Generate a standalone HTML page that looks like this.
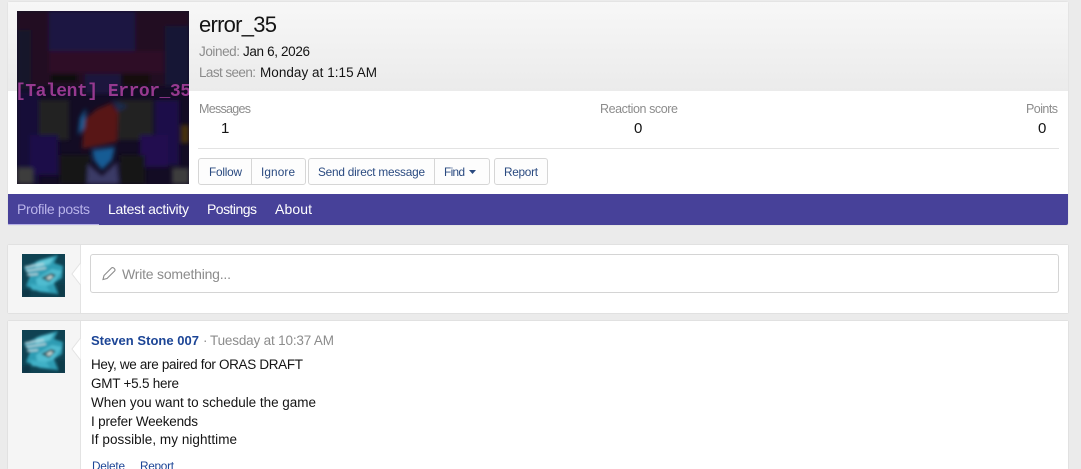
<!DOCTYPE html>
<html><head><meta charset="utf-8"><style>
html,body{margin:0;padding:0;width:1081px;height:469px;overflow:hidden;background:#ebebeb}
.a{position:absolute;box-sizing:border-box}
svg{position:absolute;left:0;top:0}
text{font-family:"Liberation Sans",sans-serif;font-size:13.5px;fill:#141414}
.g{fill:#8c8c8c}.b{fill:#2a4a80}.w{fill:#fff}
.s{font-size:12.5px}.k{font-size:11.8px}.n{font-size:14px}
</style></head><body>
<div class="a" style="left:8px;top:2px;width:1060px;height:223px;background:#fff;border-radius:2px;box-shadow:0 0 1px #bbb"></div>
<div class="a" style="left:8px;top:2px;width:1060px;height:89px;background:linear-gradient(#f7f7f7,#ebebeb)"></div>
<div class="a" style="left:198px;top:148px;width:861px;height:1px;background:#e3e3e3"></div>
<div class="a" style="left:198px;top:158px;width:108px;height:27px;border:1px solid #d6d6d6;border-radius:3px;background:#fdfdfd"></div>
<div class="a" style="left:251px;top:158px;width:1px;height:27px;background:#d6d6d6"></div>
<div class="a" style="left:308px;top:158px;width:182px;height:27px;border:1px solid #d6d6d6;border-radius:3px;background:#fdfdfd"></div>
<div class="a" style="left:434px;top:158px;width:1px;height:27px;background:#d6d6d6"></div>
<div class="a" style="left:494px;top:158px;width:54px;height:27px;border:1px solid #d6d6d6;border-radius:3px;background:#fdfdfd"></div>
<div class="a" style="left:8px;top:194px;width:1060px;height:31px;background:#474199;border-radius:0 0 2px 2px"></div>
<div class="a" style="left:8px;top:224px;width:91px;height:1px;background:#b4aee6"></div>

<div class="a" style="left:8px;top:245px;width:1060px;height:68px;background:#fff;box-shadow:0 0 1px #bbb"></div>
<div class="a" style="left:8px;top:245px;width:73px;height:68px;background:#f5f5f5;border-right:1px solid #e3e3e3"></div>
<div class="a" style="left:90px;top:254px;width:969px;height:39px;background:#fff;border:1px solid #d4d4d4;border-radius:3px"></div>
<div class="a" style="left:8px;top:321px;width:1060px;height:148px;background:#fff;box-shadow:0 0 1px #bbb"></div>
<div class="a" style="left:8px;top:321px;width:73px;height:148px;background:#f5f5f5;border-right:1px solid #e3e3e3"></div>

<svg width="1081" height="469" viewBox="0 0 1081 469">
<defs>
<filter id="bl" x="0" y="0" width="100%" height="100%"><feGaussianBlur stdDeviation="2"/></filter>
<filter id="bs" x="-5%" y="-5%" width="110%" height="110%"><feGaussianBlur stdDeviation="1.3"/></filter>
<clipPath id="c1"><rect x="17" y="11" width="172" height="173"/></clipPath>
<clipPath id="c2"><rect width="43" height="43"/></clipPath>
<symbol id="av" viewBox="0 0 43 43">
<rect width="43" height="43" fill="#0f4252"/>
<g filter="url(#bs)" clip-path="url(#c2)">
<path d="M2 14 L18 6 L36 1 L32 9 L41 12 L40 24 L32 29 L36 40 L18 38 L4 32 L8 22 Z" fill="#2f9cb3"/>
<path d="M14 8 L32 3 L28 10 L14 14 Z" fill="#62c8d8"/>
<path d="M3 13 L22 10 M4 17 L24 14 M5 21 L16 20" stroke="#c3dde2" stroke-width="1.6" fill="none"/>
<path d="M14 25 L30 15 L40 17 L32 29 L16 35 Z" fill="#4fbcd0"/>
<path d="M19 24 L29 19 L34 21 L27 28 Z" fill="#2f5660"/>
<path d="M24 24 L29 21 L31 23 L27 26 Z" fill="#c6d6d3"/>
<path d="M8 30 L24 32 L28 38 L10 36 Z" fill="#3fb0c6"/>
<rect x="0" y="36" width="8" height="7" fill="#0c3544"/>
<rect x="36" y="30" width="7" height="13" fill="#0d3b4a"/>
</g>
</symbol>
</defs>

<!-- profile picture -->
<g clip-path="url(#c1)">
<rect x="17" y="11" width="172" height="173" fill="#130c24"/>
<g filter="url(#bl)">
<rect x="17" y="11" width="172" height="75" fill="#220a24"/>
<rect x="17" y="30" width="14" height="60" fill="#12122c"/>
<rect x="165" y="26" width="24" height="60" fill="#151634"/>
<rect x="49" y="11" width="86" height="40" fill="#1a1442"/>
<rect x="49" y="51" width="115" height="22" fill="#2e0b28"/>
<rect x="51" y="74" width="26" height="8" fill="#100c08"/>
<rect x="120" y="74" width="30" height="12" fill="#14110e"/>
<rect x="85" y="74" width="36" height="20" fill="#1a143c"/>
<rect x="17" y="92" width="22" height="92" fill="#180e38"/>
<rect x="39" y="100" width="30" height="40" fill="#212121"/>
<rect x="118" y="100" width="35" height="40" fill="#232323"/>
<rect x="155" y="100" width="24" height="65" fill="#1f1048"/>
<rect x="30" y="135" width="28" height="40" fill="#1f1048"/>
<rect x="140" y="135" width="28" height="32" fill="#23114f"/>
<rect x="60" y="155" width="30" height="29" fill="#131314"/>
<rect x="120" y="155" width="25" height="29" fill="#131314"/>
<rect x="17" y="168" width="16" height="16" fill="#3c3c3c"/>
<rect x="172" y="168" width="17" height="16" fill="#3c3c3c"/>
<rect x="181" y="125" width="8" height="18" fill="#46300f"/>
<path d="M97 109 L111 103 L118 112 L117 142 L82 149 L84 120 Z" fill="#581518"/>
<path d="M92 150 L115 147 L112 160 L102 170 L94 160 Z" fill="#195c94"/>
<path d="M88 164 L102 176 L117 162 L119 184 L87 184 Z" fill="#3a3a66"/>
<path d="M80 118 L86 108 L84 128 L78 135 Z" fill="#175c94"/>
<path d="M112 100 L128 106 L118 112 Z" fill="#1c2a4c"/>
</g>
<text x="15" y="96" textLength="176" style="font-family:'Liberation Mono',monospace;font-size:18px;font-weight:bold;fill:#96398f">[Talent] Error_35</text>
</g>

<!-- header -->
<text x="199" y="32" textLength="78" style="font-size:22px">error_35</text>
<text class="g" x="199" y="56" textLength="41">Joined:</text>
<text x="243" y="56" textLength="67">Jan 6, 2026</text>
<text class="g" x="199" y="77" textLength="57">Last seen:</text>
<text x="260" y="77" textLength="117">Monday at 1:15 AM</text>

<text class="g s" x="199" y="113" textLength="52">Messages</text>
<text x="221" y="133" style="font-size:15px">1</text>
<text class="g s" x="600" y="113" textLength="78">Reaction score</text>
<text x="634" y="133" textLength="8" style="font-size:15px">0</text>
<text class="g s" x="1026" y="113" textLength="32">Points</text>
<text x="1038" y="133" textLength="8" style="font-size:15px">0</text>

<text class="b k" x="209" y="176" textLength="33">Follow</text>
<text class="b k" x="261" y="176" textLength="34">Ignore</text>
<text class="b k" x="318" y="176" textLength="107">Send direct message</text>
<text class="b k" x="444" y="176" textLength="21">Find</text>
<path d="M469 170 L476 170 L472.5 174 Z" fill="#2a4a80"/>
<text class="b k" x="504" y="176" textLength="34">Report</text>

<text class="n" x="17" y="214" textLength="73" style="fill:#b9b4ea">Profile posts</text>
<text class="w n" x="108" y="214" textLength="81">Latest activity</text>
<text class="w n" x="207" y="214" textLength="50">Postings</text>
<text class="w n" x="275" y="214" textLength="37">About</text>

<!-- write box -->
<path d="M80.5 263 L72 274 L80.5 285" fill="#fff" stroke="#e3e3e3"/>
<use href="#av" x="22" y="254" width="43" height="43"/>
<path d="M103 279.5 L104 275.5 L111.5 268 C113 266.6 116 269.4 114.6 271 L107 278.5 Z" fill="none" stroke="#8c8c8c" stroke-width="1.1"/>
<text class="g n" x="122" y="279" textLength="109">Write something...</text>

<!-- post -->
<path d="M80.5 338 L72 349 L80.5 360" fill="#fff" stroke="#e3e3e3"/>
<use href="#av" x="22" y="330" width="43" height="43"/>
<text x="91" y="345" textLength="108" style="font-size:13px;font-weight:bold;fill:#1c4596">Steven Stone 007</text>
<text class="g" x="203" y="345">·</text>
<text class="g" x="210" y="345" textLength="124">Tuesday at 10:37 AM</text>
<text x="91" y="369" textLength="212">Hey, we are paired for ORAS DRAFT</text>
<text x="91" y="388" textLength="88">GMT +5.5 here</text>
<text x="91" y="407" textLength="225">When you want to schedule the game</text>
<text x="91" y="426" textLength="107">I prefer Weekends</text>
<text x="91" y="444" textLength="146">If possible, my nighttime</text>
<text class="k" x="92" y="470" textLength="33" style="fill:#1c4596">Delete</text>
<text class="k" x="140" y="470" textLength="34" style="fill:#1c4596">Report</text>
</svg>
</body></html>
